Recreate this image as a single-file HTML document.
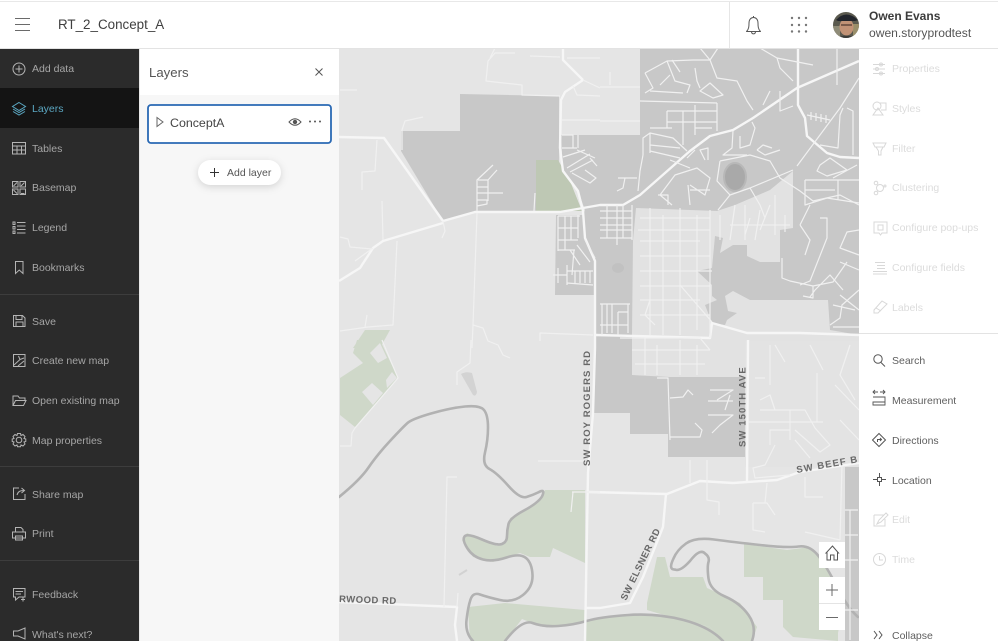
<!DOCTYPE html>
<html><head><meta charset="utf-8"><style>
html,body{margin:0;padding:0;background:#fff}
#p{position:relative;width:998px;height:641px;overflow:hidden;font-family:"Liberation Sans",sans-serif;background:#fff;filter:blur(.35px)}
#p>*{position:absolute}
.l{font-size:10.5px;line-height:14px;white-space:nowrap}
.n{color:#a6a6a6;left:32px;margin-top:1px}
.r{left:892px;color:#5f5f5f;margin-top:1px}
.d{color:#dcdcdc}
svg{overflow:visible}
.ic{fill:none;stroke:#b4b4b4;stroke-width:1}
.ir{fill:none;stroke:#555;stroke-width:1}
.id{fill:none;stroke:#d8d8d8;stroke-width:1}
</style></head><body><div id="p">
<svg style="left:0;top:0" width="998" height="641" viewBox="0 0 998 641">
<rect x="339" y="48" width="520" height="593" fill="#e5e5e5"/>
<!-- dark land -->
<g fill="#c8c8c8">
<path d="M460 94L559 96V212H475L443 221L401 151V131H460Z"/>
<path d="M640 48H859V341H745V457H668V434H630V413H594V295H555L556 215H583L585 210L578 191L563 171L561 135H640Z"/>
<rect x="845" y="467" width="14" height="174"/>
</g>
<g fill="#e2e2e2">
<path d="M636 208L717 211L735 205L770 190L793 171V228L780 230V262H760L747 256V245H733L720 253L723 238L715 236L712 268L697 271L712 285V296L717 300L705 305L712 323V338L632 335L633 241Z"/>
<path d="M712 323L725 325L727 320L737 313L728 311L725 296L733 291L750 300H803H828L830 330L859 335V341H745V377H670L632 375V335Z"/>
</g>
<rect x="745" y="341" width="114" height="126" fill="#e3e3e3"/>
<!-- greens -->
<g fill="#bec8b4"><path d="M536 160H558L570 181L582 211H536Z"/></g>
<g fill="#cfd8c9">
<path d="M365 330H390L380 348H353Z"/>
<path d="M357 340H380L398 378L355 427L340 415V378L363 363L353 353Z"/>
<path d="M545 490H585V563L553 548L550 557H530L520 553L493 562L473 557L462 540L467 533L497 546L507 542V530L510 518L538 503Z"/>
<path d="M468 607L505 603L585 610V622L573 625L543 627L522 619L505 641H470Z"/>
<path d="M586 620L600 617V641H586Z"/>
<path d="M600 618L657 614L710 627L723 641H600Z"/>
<path d="M657 557H665L670 577H703L707 588L740 603L757 627L752 641H723L710 627L657 613L647 610V603Z"/>
<path d="M744 544L787 550L810 547L827 567L843 607L838 633V641L793 637L783 627V600H763V577H744Z"/>
</g>
<g fill="#e5e5e5"><path d="M370 353L380 343L387 358L378 363Z"/><path d="M362 392L372 383L383 393L373 405Z"/><path d="M387 388L397 378L392 372L386 380Z"/></g>
<!-- water -->
<ellipse cx="735" cy="177" rx="11" ry="14" fill="#a9a9a9" stroke="#b8b8b8" stroke-width="2"/>
<path d="M461 374Q466 371 472 373L477 392Q476 397 473 395Z" fill="#d3d3d3"/>
<ellipse cx="618" cy="268" rx="6" ry="5" fill="#c1c1c1"/>
<path d="M459 575L467 570" stroke="#d2d2d2" stroke-width="2"/>
<g fill="none" stroke="#b2b2b2" stroke-width="2.6" stroke-linejoin="round" stroke-linecap="round">
<path d="M339 497Q360 480 368.5 467.5Q377 455 390 441Q403 427 407.5 423Q412 419 431 413.5Q450 408 465 406.5Q480 405 484 410Q488 415 488 427.5Q488 440 485 452.5Q482 465 489.5 469Q497 473 508.5 486Q520 499 526.5 497Q533 495 538 492.5Q546 488 542 496.500Q538 503 524 510.5Q510 518 508.5 524Q507 530 507 536Q507 542 502 544Q497 546 482 539.5Q467 533 464.5 536.5Q462 540 467.5 548.5Q473 557 483 559.5Q493 562 506.5 557.5Q520 553 526 558Q532 563 532.5 575Q533 587 523 595Q513 603 500 600Q487 597 480 594.5Q473 592 470.5 599.5Q468 607 466.5 620Q465 633 473 641"/>
<path d="M505 641Q522 619 532.5 623Q543 627 558 626Q573 625 586.5 621Q600 617 628.5 615Q657 613 683.5 620Q710 627 723 641"/>
<path d="M752 641Q757 627 748.5 615Q740 603 725 596.5Q710 590 708.5 578.5Q707 567 708.5 562Q710 557 705 553.5Q700 548 690 561Q680 572 675 569.5Q668 570 673.5 558.5Q677 550 686 543.5Q695 537 714 539.5Q733 542 760 545Q787 548 798.5 546.5Q810 545 818.5 556Q827 567 837 587Q847 607 858 617"/>
</g>
<!-- major roads -->
<g fill="none" stroke="#f6f6f6" stroke-width="2.4" stroke-linejoin="round">
<path d="M339 137L384 138L443 221L475 212L560 212L583 208L600 205L623 205L640 195L690 151L710 136L733 130L753 118L797 88L859 61"/>
<path d="M339 281L360 268L373 248L383 241L443 223"/>
<path d="M583 80L563 60V48M583 80L565 92L561 100L560 148L563 171L578 191L583 211L585 238L595 261L595 348L593 413L588 473L585 641"/>
<path d="M798 48V105L805 118L807 136L827 153L840 157L859 158"/>
<path d="M596 335L710 338L712 323L747 333L800 333L859 335"/>
<path d="M748 340L747 483"/>
<path d="M589 492L667 494L700 481L733 483L777 480L800 472L859 463"/>
<path d="M666 494L663 527L643 577L630 603L600 608L585 608"/>
<path d="M339 602L457 607L455 625L457 641"/>
</g>
<!-- minor roads -->
<g fill="none" stroke="#f0f0f0" stroke-width="1.2" stroke-linejoin="round">
<path d="M377 140L375 171L362 172L362 190M382 201L383 240M397 241L393 325L368 327L340 331M365 327L367 315M340 237L348 239L350 247L372 249M355 261L373 248M340 90L357 90M402 150L402 130L405 121L423 117M443 221L445 231L442 238"/>
<path d="M515 53H495L488 61L486 81L522 85L522 95L560 96M495 48L490 58M530 56L560 57M562 120H600M573 86L577 95L600 96M583 80L600 88M567 58H600"/>
<path d="M477 211V180L493 165M478 180H488L497 170M477 187H488M477 193H503M477 200H487V204L477 206M488 180V201M535 193L534 211"/>
<path d="M477 213L473 325L472 348M473 325L483 328L488 341L498 345L503 355L510 358M471 340L470 363L457 372L457 385M540 341V333L593 335M538 461H590M457 477H447L444 607M572 492H600M573 492L571 512M340 446H351L352 433L355 428L398 378L382 340M458 593L457 607"/>
<path d="M562 135H573V148M562 148H577M577 150L595 158M563 157L585 150M567 168L590 154M570 172L593 160M590 158L597 166M572 173L590 183L596 178L585 170M578 135V148"/>
<path d="M558 216H580M558 228H578M558 240H578M558 250H575M558 216V251M578 215V238M565 216V250M571 216V240M570 250L580 265M577 245L590 262M585 240L595 258M574 250L572 275M558 268V283M553 275H567M567 283L593 285M567 271H593M567 265V285M575 271V283M580 271V283M585 271V283M590 271V283"/>
<path d="M600 211H632M600 218H632M600 225H632M600 230H632M600 238H632M607 205V238M617 205V245M623 205V238M632 205V240M618 178H637M625 178L623 188L617 191M610 72V85M600 87H640M600 121H640"/>
<path d="M600 304H630M602 304V335M607 304V333M612 304V333M618 312V335M618 312H628M628 304V333M600 325H628"/>
<path d="M645 73L667 61L693 60L710 60L717 78L737 81L747 101L753 110M645 73L653 88L645 93M667 61L675 81L690 85L687 93M695 68L697 81L700 88M650 91L683 93M700 91L710 83L723 95L713 98ZM710 60L700 48M710 60L718 48M672 60L680 72M670 75L660 85"/>
<path d="M640 101L717 103M717 103V131M667 111H717M667 111V128M683 111V145M695 105V135M667 122H717M695 128H712M650 128L672 128"/>
<path d="M643 155V138L650 133L673 138L687 151M650 145L680 148M650 151L680 158M643 155L640 171L638 191M650 133V153M687 158L695 150M670 160L690 168M660 195L675 175L697 168L710 178L705 195L690 185M660 195L672 205M688 185L690 205M705 160L700 150L708 148V160M690 190L710 190M658 195H668V205"/>
<path d="M720 161L717 181L730 195L750 188L793 170M720 161L750 155L770 161L780 178L800 191L813 201L840 195L859 205M730 195L718 210M750 188L760 205L765 218M733 131L732 148L723 155H747M740 136V148L750 145L755 128L752 122M757 150L765 155L780 150M757 150L763 145L772 148"/>
<path d="M797 166L840 108L859 78M760 48L777 58L813 65M777 58L780 68L793 81M837 48V85M770 91L763 105M780 91V111L793 106M807 115L830 120M811 112V120M816 113V121M821 114V122M826 115V123M843 108L840 115L838 148L820 145M847 108L853 111V155M820 165L830 158L847 170L827 176L817 171ZM857 165L833 178M805 180V205L827 198L859 203M805 180H859M805 190H835M838 180V200M820 218H827V238L810 281L800 285M810 205L800 225M800 225L810 240L805 255"/>
<path d="M859 230L847 232L840 248L859 255M859 270L840 262M843 290L830 275L815 290L810 297M782 258V278L790 281L813 286V298L803 296M813 286L833 282L847 262M859 290L842 305L840 318L830 325M833 305L855 310M840 295L859 310M833 327H859"/>
<path d="M640 218H710M638 230H710M640 241H700M640 256H710M640 271H712M640 286H710M640 300H700M640 315H710M650 208V335M663 215V335M680 208V335M697 215V330M710 210V338M650 300L645 315L655 325M680 285L712 322M620 338H700L710 350M632 350H710M635 364H705M645 338V375M657 345V375M680 340V375M697 345V375M720 215V240M735 205L730 240M745 205V240M760 210L755 240M775 195V235M785 215V232M730 225H790M750 218L745 235M770 205L760 230"/>
<path d="M657 378H668L670 440M670 398L683 397L688 390L693 395M670 437H700L702 430L695 423M710 390H733L717 400M708 401H733M708 415H733L720 425L712 433M730 395L725 410M690 460V483M707 460V500L719 502V515M753 503V530L765 532M753 503H767L775 515M767 483L765 503M805 477V497L823 497M842 463L840 540M805 532L840 540M748 422H823M817 373V422M810 345L823 370M770 345V385M775 345L785 362M755 378H765M760 400L770 395L775 410H760M790 410V440M775 410H805L815 428L830 445L820 452L795 430M790 430H770V445M795 440L810 458M775 445L765 465L753 468L755 478L790 475M850 345L840 375L855 400M835 385L859 410M840 420L859 440"/>
<path d="M845 510H858M850 510V640M845 535H858M845 560H858M845 610H858"/>
</g>
<!-- panels -->
<rect x="0" y="0" width="998" height="48" fill="#fff"/>
<rect x="859" y="48" width="139" height="593" fill="#fff"/>
<rect x="0" y="1" width="998" height="1" fill="#e8e8e8"/>
<rect x="0" y="48" width="998" height="1" fill="#e3e3e3"/>
<rect x="729" y="2" width="1" height="46" fill="#e6e6e6"/>
<rect x="859" y="333" width="139" height="1" fill="#e3e3e3"/>
<rect x="0" y="49" width="139" height="592" fill="#2b2b2b"/>
<rect x="0" y="88" width="139" height="40" fill="#141414"/>
<rect x="0" y="294" width="139" height="1" fill="#3d3d3d"/>
<rect x="0" y="466" width="139" height="1" fill="#3d3d3d"/>
<rect x="0" y="560" width="139" height="1" fill="#3d3d3d"/>
<rect x="140" y="49" width="199" height="46" fill="#fff"/>
<rect x="140" y="95" width="199" height="546" fill="#f7f7f7"/>
<rect x="139" y="49" width="1" height="592" fill="#e8e8e8"/>
<rect x="148" y="105" width="183" height="38" rx="3" fill="#fff" stroke="#2a69b4" stroke-width="1.8"/>
<rect x="198" y="160" width="83" height="25" rx="12.5" fill="#fff" style="filter:drop-shadow(0 2px 4px rgba(0,0,0,.14))"/>
<!-- hamburger -->
<path d="M15 18.5H30M15 24.5H30M15 30.5H30" stroke="#6a6a6a" stroke-width="1.1" fill="none"/>
<!-- bell -->
<g class="ir" stroke-linejoin="round"><path d="M746.5 31.5C749 29 749 26 749 23C749 19.5 751 17.5 753.5 17.5C756 17.5 758 19.5 758 23C758 26 758 29 760.5 31.5Z"/><path d="M751.5 32C752 34.5 755 34.5 755.5 32M753.5 17.5V16"/></g>
<!-- grid dots -->
<g fill="#777"><circle cx="792" cy="18" r="1.2"/><circle cx="799" cy="18" r="1.2"/><circle cx="806" cy="18" r="1.2"/><circle cx="792" cy="25" r="1.2"/><circle cx="799" cy="25" r="1.2"/><circle cx="806" cy="25" r="1.2"/><circle cx="792" cy="31.5" r="1.2"/><circle cx="799" cy="31.5" r="1.2"/><circle cx="806" cy="31.5" r="1.2"/></g>
<!-- avatar -->
<defs><clipPath id="av"><circle cx="846" cy="25" r="13"/></clipPath></defs>
<g clip-path="url(#av)"><rect x="833" y="12" width="26" height="26" fill="#5b5a4f"/><rect x="833" y="26" width="7" height="12" fill="#8f8c78"/><rect x="853" y="24" width="6" height="14" fill="#9a8f6a"/><ellipse cx="846.5" cy="27" rx="7" ry="8.5" fill="#c19276"/><path d="M836 20Q846 9 858 20L855 21H838Z" fill="#22252c"/><rect x="841" y="24" width="11" height="2" fill="#7a5a4a"/><path d="M838 38Q846 33 855 38Z" fill="#3a3a38"/></g>
<!-- left icons -->
<g class="ic">
<circle cx="19" cy="69" r="6"/><path d="M19 65.5V72.5M15.5 69H22.5"/>
<g stroke="#5ba7c2"><path d="M19 102.5L25.5 106.5L19 110.5L12.5 106.5Z"/><path d="M13 109L19 112.5L25 109M13 111.5L19 115L25 111.5"/></g>
<path d="M12.5 142.5H25.5V154H12.5ZM12.5 146H25.5M12.5 150H25.5M17 146V154M21.5 146V154"/>
<path d="M12.5 181.5H18V187H12.5ZM20 181.5H25.5V187H20ZM12.5 189H18V194.5H12.5ZM20 189H25.5V194.5H20ZM13.5 186L17 182.5M21 186L24.5 182.5M13.5 190L17 193.5M21 193.5H24.5"/>
<path d="M17 222.5H25.5M17 226H25.5M17 229.5H25.5M17 233H25.5M13 222H15V224.5H13ZM13 226.5H15V229H13ZM13 231H15V233.5H13Z"/>
<path d="M15.5 261.5H23V273.5L19.25 270L15.5 273.5Z"/>
<path d="M13.5 315.5H22.5L25 318V326.5H13.5ZM16 315.5V319.5H22V315.5M16 326.5V322H23V326.5"/>
<path d="M13.5 354.5H25V366.5H13.5ZM14 365L20 359.5L18.5 356M20 359.5L24 358M18 366L24 361"/>
<path d="M13 405.5V396H18L19.5 398H25V400.5M13 405.5H23.5L26 400.5H15.5L13 405.5Z"/>
<circle cx="19" cy="440" r="2.8"/><path d="M17.5 433.5H20.5L21 435.5L23 434.5L25 436.5L24 438.5L25.8 439V441.5L24 442L25 444L23 446L21 445L20.5 446.8H17.5L17 445L15 446L13 444L14 442L12.2 441.5V439L14 438.5L13 436.5L15 434.5L17 435.5Z"/>
<path d="M19 488H13.5V499.5H25V494M17 495C18 491.5 20 490.5 24 490.5M21.5 488L24.5 490.5L21.5 493"/>
<path d="M15.5 532V527.5H21L23 529.5V532M12.5 532H25.5V538H12.5ZM15.5 536H22.5V540H15.5Z"/>
<path d="M13.5 588.5H25V597H19L15.5 600V597H13.5ZM15.5 591.5H23M15.5 594H21M21 599.5H25M23 597.5V601.5"/>
<path d="M25 628V639L18 636H13.5V631H18Z"/>
</g>
<!-- right icons disabled -->
<g class="id">
<path d="M873 64.5H885M873 69H885M873 73.5H885"/><circle cx="881" cy="64.5" r="1.5"/><circle cx="877" cy="69" r="1.5"/><circle cx="881" cy="73.5" r="1.5"/>
<circle cx="877" cy="106" r="4"/><path d="M880 103H886V110H881M873 115L878 108L883 115Z"/>
<path d="M873 143H886L884 147H875ZM876 147L878.5 151V155H881V151L883 147"/>
<circle cx="880" cy="188" r="3.5"/><circle cx="876" cy="183" r="1.8"/><circle cx="876" cy="193" r="1.8"/><circle cx="885" cy="186" r="1"/>
<path d="M874 222H887V233H882L880.5 235L879 233H874Z"/><rect x="878" y="225" width="5" height="5"/>
<path d="M875 262.5H885M877 265.5H885M877 268.5H885M873 271.5H887M873 274H887"/>
<path d="M874 310L882 301L887 304L878 313L874 313ZM876 308L881 311"/>
<path d="M874 515H884M874 515V526H885V519M877 524L879 520L886 513L888 515L881 522Z"/>
<circle cx="879.5" cy="559.5" r="6"/><path d="M879.5 556V560H883"/>
</g>
<!-- right icons active -->
<g class="ir">
<circle cx="878" cy="359" r="4.2"/><path d="M881 362.5L885 366.5"/>
<path d="M873 397H885V405H873V402H885M875 394L873 392L875 390M873 392H878M883 394L885 392L883 390M880 392H885" stroke-width=".9"/>
<path d="M879 433.5L885.5 440L879 446.5L872.5 440Z"/><path d="M877.5 442V439.5H881M880 438L881.5 439.5L880 441"/>
<rect x="877.5" y="477.5" width="4" height="4"/><path d="M879.5 473V477M879.5 482V486M873 479.5H877M882 479.5H886"/>
<path d="M874 631L877 635L874 639M879 631L882 635L879 639"/>
</g>
<!-- panel icons -->
<path d="M157 117.5L163 122L157 126.5Z" fill="none" stroke="#666"/>
<path d="M315.5 68.5L322.5 75.5M322.5 68.5L315.5 75.5" stroke="#555" fill="none"/>
<g fill="none" stroke="#555"><path d="M289 122Q295 115.5 301 122Q295 128.5 289 122Z"/></g><circle cx="295" cy="122" r="2.2" fill="#555"/>
<g fill="#555"><circle cx="310" cy="121.5" r="1"/><circle cx="315" cy="121.5" r="1"/><circle cx="320" cy="121.5" r="1"/></g>
<path d="M210 172.5H219M214.5 168V177" stroke="#333" fill="none"/>
<!-- map labels -->
<g font-family="'Liberation Sans',sans-serif" font-size="9.5" font-weight="bold" fill="#686868" letter-spacing="1.1">
<text transform="translate(590 466) rotate(-90)">SW ROY ROGERS RD</text>
<text transform="translate(745.5 447) rotate(-90)">SW 150TH AVE</text>
<text transform="translate(797 473) rotate(-10)">SW BEEF B</text>
<text transform="translate(626 601) rotate(-64)" letter-spacing=".5">SW ELSNER RD</text>
<text transform="translate(339 602) rotate(2)" letter-spacing=".5">RWOOD RD</text>
</g>
<!-- map controls -->
<rect x="819" y="542" width="26" height="26" fill="#fff"/>
<rect x="819" y="577" width="26" height="53" fill="#fff"/>
<rect x="819" y="603" width="26" height="1" fill="#e4e4e4"/>
<path d="M827 560V553H826L832.5 546L838.5 553H837.5V560H834V555H830.5V560Z" fill="none" stroke="#555"/>
<path d="M832 584V596M826 590H838M826 617.5H838" stroke="#6a6a6a" fill="none"/>
</svg>

<div class="l" style="left:58px;top:16px;font-size:13.4px;line-height:18px;color:#3f3f3f">RT_2_Concept_A</div>
<div class="l" style="left:869px;top:8px;font-size:12px;line-height:16px;color:#3c3c3c;font-weight:bold">Owen Evans</div>
<div class="l" style="left:869px;top:25px;font-size:12.1px;line-height:16px;color:#555">owen.storyprodtest</div>
<div class="l" style="left:149px;top:64px;font-size:13.2px;line-height:18px;color:#555">Layers</div>
<div class="l" style="left:170px;top:115px;font-size:12.4px;line-height:16px;color:#444">ConceptA</div>
<div class="l" style="left:227px;top:166px;color:#555">Add layer</div>

<div class="l n" style="top:61px">Add data</div>
<div class="l n" style="top:101px;color:#5ba7c2">Layers</div>
<div class="l n" style="top:141px">Tables</div>
<div class="l n" style="top:180px">Basemap</div>
<div class="l n" style="top:220px">Legend</div>
<div class="l n" style="top:260px">Bookmarks</div>
<div class="l n" style="top:314px">Save</div>
<div class="l n" style="top:353px">Create new map</div>
<div class="l n" style="top:393px">Open existing map</div>
<div class="l n" style="top:433px">Map properties</div>
<div class="l n" style="top:487px">Share map</div>
<div class="l n" style="top:526px">Print</div>
<div class="l n" style="top:587px">Feedback</div>
<div class="l n" style="top:627px">What's next?</div>

<div class="l r d" style="top:61px">Properties</div>
<div class="l r d" style="top:101px">Styles</div>
<div class="l r d" style="top:141px">Filter</div>
<div class="l r d" style="top:180px">Clustering</div>
<div class="l r d" style="top:220px">Configure pop-ups</div>
<div class="l r d" style="top:260px">Configure fields</div>
<div class="l r d" style="top:300px">Labels</div>
<div class="l r" style="top:353px">Search</div>
<div class="l r" style="top:393px">Measurement</div>
<div class="l r" style="top:433px">Directions</div>
<div class="l r" style="top:473px">Location</div>
<div class="l r d" style="top:512px">Edit</div>
<div class="l r d" style="top:552px">Time</div>
<div class="l r" style="top:628px">Collapse</div>
</div></body></html>
